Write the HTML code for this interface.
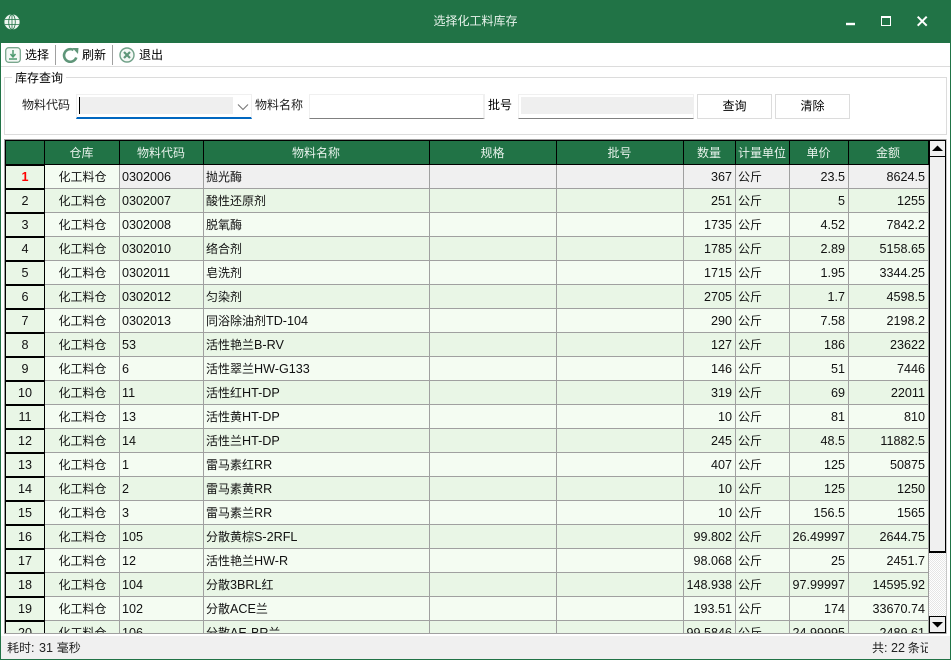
<!DOCTYPE html>
<html lang="zh"><head><meta charset="utf-8"><title>选择化工料库存</title>
<style>
*{box-sizing:border-box}
html,body{margin:0;padding:0;width:951px;height:660px;overflow:hidden;background:#fff}
body{font-family:"Noto Sans CJK SC","Liberation Sans",sans-serif;font-size:12px;color:#000;position:relative}
.a{position:absolute;white-space:nowrap;line-height:16px}
#frame{position:absolute;left:0;top:0;width:951px;height:660px;border:1px solid #217346;border-width:0 1px 1px 1px;pointer-events:none}
#title{position:absolute;left:0;top:0;width:951px;height:43px;background:#217346}
#grid{position:absolute;left:4px;top:139px;width:926px;height:495px;border:1px solid #a0a0a0;border-width:1px 0 1px 1px;overflow:hidden;background:#fff}
#grid:before{content:"";position:absolute;left:0;top:0;bottom:0;width:1px;background:#000;z-index:2}
table{position:absolute;left:1px;top:0;border-collapse:separate;border-spacing:0;table-layout:fixed;width:923px}
th{height:25px;background:#217346;color:#e8f3ec;font-weight:400;border-right:1px solid #000;border-bottom:1px solid #000;border-top:1px solid #000;padding:0 1px 0 0;line-height:22px;font-size:12px;text-align:center}
td{height:24px;border-right:1px solid #a0a0a0;border-bottom:1px solid #a0a0a0;padding:0 3px 0 2px;line-height:22px;overflow:hidden;white-space:nowrap;font-size:12px;color:#111}
td.h{background:#e9f6e7;border-right:1px solid #000;border-bottom:1px solid #000;border-top:1px solid #000;text-align:center;padding:0;font:12.6px/22px "Liberation Sans",sans-serif}
td.c{text-align:center;padding:0 2px 0 3px}
td.n,td.r{font:12.6px/22px "Liberation Sans",sans-serif}
td.r{text-align:right;padding-right:3px}
b{font:400 12.6px "Liberation Sans",sans-serif}
tr:nth-child(even) td{background:#e9f6e6}
tr:nth-child(odd) td{background:#f4fcf2}
tr td.h{background:#e9f6e6!important}
tr.s td{background:#f0f0f0}
tr.s td.c{background:#f4fcf2!important}
tr.s td.h{color:#f00;font-weight:700}
.inp{position:absolute;height:25px;border:1px solid #f0f0f0;border-bottom:1px solid #808080;background:#fff}
.btn{position:absolute;top:94px;height:25px;width:75px;border:1px solid #dcdcdc;background:#fff;text-align:center;line-height:22px}
</style></head><body>
<div id="title"></div>
<svg class="a" style="left:4px;top:14px" width="16" height="16" viewBox="0 0 16 16"><circle cx="8" cy="8" r="7.6" fill="#eef5f0"/><g fill="none" stroke="#217346" stroke-width=".8"><ellipse cx="8" cy="8" rx="3.3" ry="7.5"/><path d="M8 .5V15.500M1 5.500H15M1 10.500H15"/></g></svg>
<div class="a" style="left:0;top:13px;width:951px;text-align:center;color:#e8f3ec;font-size:12px">选择化工料库存</div>
<svg class="a" style="left:840px;top:12px" width="100" height="20" viewBox="0 0 100 20"><path d="M6 12H15" stroke="#fff" stroke-width="2.400" fill="none"/><path d="M41.500 4.500H50.500V13.500H41.500Z" stroke="#fff" fill="none"/><path d="M41 5H51" stroke="#fff" stroke-width="2" fill="none"/><path d="M77.700 4.700L86.700 13.700M86.700 4.700L77.700 13.700" stroke="#fff" stroke-width="2" fill="none"/></svg>

<svg class="a" style="left:5px;top:47px" width="16" height="16" viewBox="0 0 16 16"><rect x=".7" y=".7" width="14.600" height="14.600" rx="3" fill="#f4f8f5" stroke="#7aa78e" stroke-width="1.300"/><path d="M8 3V9M5.500 7L8 10L10.500 7M4 12H12" stroke="#4f9a70" stroke-width="1.500" fill="none"/></svg>
<div class="a" style="left:25px;top:47px">选择</div>
<div style="position:absolute;left:55px;top:45px;width:1px;height:20px;background:#a0a0a0"></div>
<svg class="a" style="left:62px;top:47px" width="17" height="16" viewBox="0 0 17 16"><path d="M14.300 10.500A6.300 6.300 0 1 1 11.500 3" fill="none" stroke="#5f9679" stroke-width="2.600"/><path d="M10.500 1L16.500 1L16 7Z" fill="#5f9679"/></svg>
<div class="a" style="left:82px;top:47px">刷新</div>
<div style="position:absolute;left:112px;top:45px;width:1px;height:20px;background:#a0a0a0"></div>
<svg class="a" style="left:119px;top:47px" width="16" height="16" viewBox="0 0 16 16"><circle cx="8" cy="8" r="7" fill="#f4f8f5" stroke="#6fa087" stroke-width="1.400"/><path d="M5 5L11 11M11 5L5 11" stroke="#5f9679" stroke-width="2.200" fill="none"/></svg>
<div class="a" style="left:139px;top:47px">退出</div>
<div style="position:absolute;left:1px;top:66px;width:949px;height:1px;background:#dcdcdc"></div>

<div style="position:absolute;left:4px;top:77px;width:943px;height:58px;border:1px solid #dcdcdc"></div>
<div class="a" style="left:12px;top:70px;background:#fff;padding:0 3px;height:16px">库存查询</div>
<div class="a" style="left:22px;top:97px;color:#222">物料代码</div>
<div style="position:absolute;left:76px;top:94px;width:176px;height:25px;background:#fff;border:1px solid #f0f0f0;border-bottom:2px solid #0067c0"></div>
<div style="position:absolute;left:79px;top:97px;width:154px;height:17px;background:#efefef"></div>
<div style="position:absolute;left:79px;top:97px;width:1px;height:17px;background:#000"></div>
<svg class="a" style="left:237px;top:103px" width="12" height="8" viewBox="0 0 12 8"><path d="M1 1.500L6 6.500L11 1.500" fill="none" stroke="#777" stroke-width="1.100"/></svg>
<div class="a" style="left:255px;top:97px;color:#222">物料名称</div>
<div class="inp" style="left:309px;top:94px;width:176px;border-right:2px solid #f0f0f0"></div>
<div class="a" style="left:488px;top:97px">批号</div>
<div class="inp" style="left:518px;top:94px;width:176px"></div>
<div style="position:absolute;left:521px;top:97px;width:172px;height:17px;background:#efefef"></div>
<div class="btn" style="left:697px">查询</div>
<div class="btn" style="left:775px">清除</div>

<div id="grid"><table>
<colgroup><col style="width:39px"><col style="width:75px"><col style="width:84px"><col style="width:226px"><col style="width:127px"><col style="width:127px"><col style="width:52px"><col style="width:54px"><col style="width:59px"><col style="width:80px"></colgroup>
<thead><tr><th></th><th>仓库</th><th>物料代码</th><th>物料名称</th><th>规格</th><th>批号</th><th>数量</th><th>计量单位</th><th>单价</th><th>金额</th></tr></thead>
<tbody>
<tr class="s"><td class="h">1</td><td class="c">化工料仓</td><td class="n">0302006</td><td>抛光酶</td><td></td><td></td><td class="r">367</td><td>公斤</td><td class="r">23.5</td><td class="r">8624.5</td></tr>
<tr><td class="h">2</td><td class="c">化工料仓</td><td class="n">0302007</td><td>酸性还原剂</td><td></td><td></td><td class="r">251</td><td>公斤</td><td class="r">5</td><td class="r">1255</td></tr>
<tr><td class="h">3</td><td class="c">化工料仓</td><td class="n">0302008</td><td>脱氧酶</td><td></td><td></td><td class="r">1735</td><td>公斤</td><td class="r">4.52</td><td class="r">7842.2</td></tr>
<tr><td class="h">4</td><td class="c">化工料仓</td><td class="n">0302010</td><td>络合剂</td><td></td><td></td><td class="r">1785</td><td>公斤</td><td class="r">2.89</td><td class="r">5158.65</td></tr>
<tr><td class="h">5</td><td class="c">化工料仓</td><td class="n">0302011</td><td>皂洗剂</td><td></td><td></td><td class="r">1715</td><td>公斤</td><td class="r">1.95</td><td class="r">3344.25</td></tr>
<tr><td class="h">6</td><td class="c">化工料仓</td><td class="n">0302012</td><td>匀染剂</td><td></td><td></td><td class="r">2705</td><td>公斤</td><td class="r">1.7</td><td class="r">4598.5</td></tr>
<tr><td class="h">7</td><td class="c">化工料仓</td><td class="n">0302013</td><td>同浴除油剂<b>TD-104</b></td><td></td><td></td><td class="r">290</td><td>公斤</td><td class="r">7.58</td><td class="r">2198.2</td></tr>
<tr><td class="h">8</td><td class="c">化工料仓</td><td class="n">53</td><td>活性艳兰<b>B-RV</b></td><td></td><td></td><td class="r">127</td><td>公斤</td><td class="r">186</td><td class="r">23622</td></tr>
<tr><td class="h">9</td><td class="c">化工料仓</td><td class="n">6</td><td>活性翠兰<b>HW-G133</b></td><td></td><td></td><td class="r">146</td><td>公斤</td><td class="r">51</td><td class="r">7446</td></tr>
<tr><td class="h">10</td><td class="c">化工料仓</td><td class="n">11</td><td>活性红<b>HT-DP</b></td><td></td><td></td><td class="r">319</td><td>公斤</td><td class="r">69</td><td class="r">22011</td></tr>
<tr><td class="h">11</td><td class="c">化工料仓</td><td class="n">13</td><td>活性黄<b>HT-DP</b></td><td></td><td></td><td class="r">10</td><td>公斤</td><td class="r">81</td><td class="r">810</td></tr>
<tr><td class="h">12</td><td class="c">化工料仓</td><td class="n">14</td><td>活性兰<b>HT-DP</b></td><td></td><td></td><td class="r">245</td><td>公斤</td><td class="r">48.5</td><td class="r">11882.5</td></tr>
<tr><td class="h">13</td><td class="c">化工料仓</td><td class="n">1</td><td>雷马素红<b>RR</b></td><td></td><td></td><td class="r">407</td><td>公斤</td><td class="r">125</td><td class="r">50875</td></tr>
<tr><td class="h">14</td><td class="c">化工料仓</td><td class="n">2</td><td>雷马素黄<b>RR</b></td><td></td><td></td><td class="r">10</td><td>公斤</td><td class="r">125</td><td class="r">1250</td></tr>
<tr><td class="h">15</td><td class="c">化工料仓</td><td class="n">3</td><td>雷马素兰<b>RR</b></td><td></td><td></td><td class="r">10</td><td>公斤</td><td class="r">156.5</td><td class="r">1565</td></tr>
<tr><td class="h">16</td><td class="c">化工料仓</td><td class="n">105</td><td>分散黄棕<b>S-2RFL</b></td><td></td><td></td><td class="r">99.802</td><td>公斤</td><td class="r">26.49997</td><td class="r">2644.75</td></tr>
<tr><td class="h">17</td><td class="c">化工料仓</td><td class="n">12</td><td>活性艳兰<b>HW-R</b></td><td></td><td></td><td class="r">98.068</td><td>公斤</td><td class="r">25</td><td class="r">2451.7</td></tr>
<tr><td class="h">18</td><td class="c">化工料仓</td><td class="n">104</td><td>分散<b>3BRL</b>红</td><td></td><td></td><td class="r">148.938</td><td>公斤</td><td class="r">97.99997</td><td class="r">14595.92</td></tr>
<tr><td class="h">19</td><td class="c">化工料仓</td><td class="n">102</td><td>分散<b>ACE</b>兰</td><td></td><td></td><td class="r">193.51</td><td>公斤</td><td class="r">174</td><td class="r">33670.74</td></tr>
<tr><td class="h">20</td><td class="c">化工料仓</td><td class="n">106</td><td>分散<b>AE-BR</b>兰</td><td></td><td></td><td class="r">99.5846</td><td>公斤</td><td class="r">24.99995</td><td class="r">2489.61</td></tr>
</tbody></table></div>

<div style="position:absolute;left:929px;top:139px;width:18px;height:495px;border:1px solid #a0a0a0;border-width:1px 0 1px 0;background:repeating-conic-gradient(#e6e6e6 0 25%,#fff 0 50%) 0 0/2px 2px"></div>
<div style="position:absolute;left:929px;top:140px;width:17px;height:413px;background:#f0f0f0;border:1px solid #000;border-bottom-width:2px"></div>
<div style="position:absolute;left:946px;top:139px;width:1px;height:495px;background:#c8c8c8"></div>
<svg class="a" style="left:929px;top:140px" width="17" height="18" viewBox="0 0 17 18"><rect x=".5" y=".5" width="16" height="16" fill="#f0f0f0" stroke="#000"/><path d="M0 16.500H17" stroke="#000"/><path d="M3 11L8.500 5.500L14 11Z" fill="#000"/></svg>
<svg class="a" style="left:929px;top:616px" width="17" height="17" viewBox="0 0 17 17"><rect x=".5" y=".5" width="16" height="16" fill="#f0f0f0" stroke="#000"/><path d="M3 6L8.500 11.500L14 6Z" fill="#000"/></svg>

<div style="position:absolute;left:1px;top:636px;width:949px;height:23px;background:#f0f0f0"></div>
<div class="a" style="left:7px;top:640px;color:#222;word-spacing:1px">耗时<b>: 31</b> 毫秒</div>
<div style="position:absolute;left:860px;top:640px;width:68px;height:16px;overflow:hidden;white-space:nowrap;line-height:16px;color:#222;text-align:left;padding-left:12px">共<b>: 22</b> 条记录</div>
<div id="frame"></div>
</body></html>
